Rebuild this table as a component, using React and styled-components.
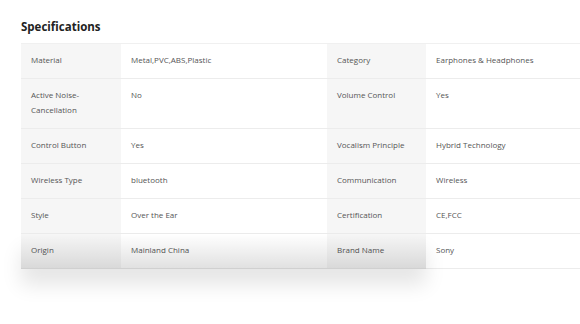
import styled, { createGlobalStyle } from 'styled-components';

const GlobalStyle = createGlobalStyle`
  html {
    overflow: hidden;
  }
  body {
    margin: 0;
    min-height: 100vh;
    background: #fff;
    font-family: 'Open Sans', 'Noto Sans', sans-serif;
  }
`;

const SPECS = [
  ['Material', 'Metal,PVC,ABS,Plastic', 'Category', 'Earphones & Headphones'],
  ['Active Noise-Cancellation', 'No', 'Volume Control', 'Yes'],
  ['Control Button', 'Yes', 'Vocalism Principle', 'Hybrid Technology'],
  ['Wireless Type', 'bluetooth', 'Communication', 'Wireless'],
  ['Style', 'Over the Ear', 'Certification', 'CE,FCC'],
  ['Origin', 'Mainland China', 'Brand Name', 'Sony'],
];

const WIDTHS = [100, 206, 99, 206];

const StyledSection = styled.section`
  padding: 19px 0 60px 21px;
  width: 700px;
`;

const StyledTitle = styled.h2`
  margin: 0 0 8px;
  font-size: 11.5px;
  line-height: 16px;
  font-weight: 700;
  color: #222;
`;

const StyledTableWrap = styled.div`
  position: relative;
`;

const StyledTable = styled.table`
  border-collapse: collapse;
  table-layout: fixed;
  width: 611px;
  border-top: 1px solid #f0f0f0;
  font-size: 8px;
  line-height: 15px;
  color: #555;
`;

const StyledCol = styled.col`
  width: ${(props) => props.$width}px;
`;

const StyledCell = styled.td`
  padding: 8px 10px 11px;
  vertical-align: top;
  background: ${(props) => (props.$label ? '#f6f6f6' : '#fff')};
  border-bottom: 1px solid #ececec;
`;

// darkening fade over the last row, with a soft shadow underneath
const StyledFade = styled.div`
  position: absolute;
  left: 0;
  bottom: 0;
  width: 405px;
  height: 35px;
  background: linear-gradient(
    rgba(0, 0, 0, 0) 0%,
    rgba(0, 0, 0, 0.12) 100%
  );
  box-shadow: 0 16px 20px 0 rgba(0, 0, 0, 0.1);
  pointer-events: none;
`;

export default function App() {
  return (
    <>
      <GlobalStyle />
      <StyledSection>
        <StyledTitle>Specifications</StyledTitle>
        <StyledTableWrap>
          <StyledTable>
            <colgroup>
              {WIDTHS.map((width, index) => (
                <StyledCol key={index} $width={width} />
              ))}
            </colgroup>
            <tbody>
              {SPECS.map((row, index) => (
                <tr key={index}>
                  {row.map((text, col) => (
                    <StyledCell key={col} $label={col % 2 === 0}>
                      {text}
                    </StyledCell>
                  ))}
                </tr>
              ))}
            </tbody>
          </StyledTable>
          <StyledFade />
        </StyledTableWrap>
      </StyledSection>
    </>
  );
}
